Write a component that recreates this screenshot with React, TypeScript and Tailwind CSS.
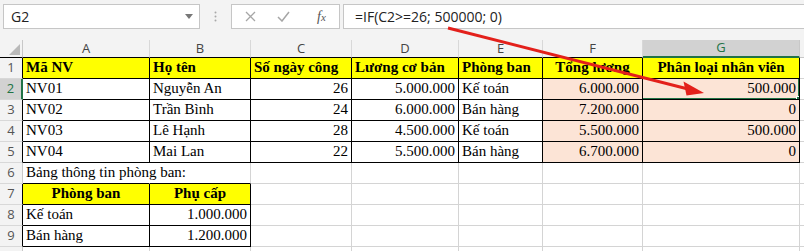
type CellProps = {
  t?: string;
  a?: "l" | "r" | "c";
  b?: boolean;
  bg?: string;
  br?: string;
  bb?: string;
  sel?: boolean;
  over?: boolean;
};

function Cell({ t, a = "l", b, bg = "bg-white", br = "border-r-[#d4d4d4]", bb = "border-b-[#d4d4d4]", sel, over }: CellProps) {
  const align = a === "r" ? "justify-end" : a === "c" ? "justify-center" : "justify-start";
  return (
    <div
      className={`relative flex items-end pb-[1px] px-[3px] border-r border-b whitespace-nowrap text-[15px] leading-[19px] text-black ${br} ${bb} ${bg} ${align} ${b ? "font-bold" : ""} ${over ? "overflow-visible z-10" : "overflow-hidden"}`}
    >
      {t}
      {sel && (
        <div className="absolute -left-[2px] -top-[2px] -right-[1px] -bottom-[1px] border-2 border-[#217346]">
          <div className="absolute -right-[4px] -bottom-[4px] w-[6px] h-[6px] bg-[#217346] border border-white" />
        </div>
      )}
    </div>
  );
}

function RowHead({ n, dark, black }: { n?: number; dark?: boolean; black?: boolean }) {
  return (
    <div
      className={`flex items-center justify-center border-b border-b-[#d8d8d8] text-[13px] ${dark ? "bg-[#d2d2d2] text-[#217346] border-r-2 border-r-[#217346]" : black ? "bg-[#f3f3f3] text-[#555] border-r border-r-black" : "bg-[#f3f3f3] text-[#555] border-r border-r-[#c8c8c8]"}`}
      style={{ fontFamily: '"Open Sans", "Noto Sans", sans-serif' }}
    >
      {n}
    </div>
  );
}

const Y = "bg-[#ffff00]";
const P = "bg-[#fce4d6]";
const K = "border-r-black";
const KB = "border-b-black";

export default function App() {
  const letters = ["A", "B", "C", "D", "E", "F", "G"];
  const emp = [
    ["NV01", "Nguyễn An", "26", "5.000.000", "Kế toán", "6.000.000", "500.000"],
    ["NV02", "Trần Bình", "24", "6.000.000", "Bán hàng", "7.200.000", "0"],
    ["NV03", "Lê Hạnh", "28", "4.500.000", "Kế toán", "5.500.000", "500.000"],
    ["NV04", "Mai Lan", "22", "5.500.000", "Bán hàng", "6.700.000", "0"],
  ];

  return (
    <div className="relative w-[804px] h-[251px] overflow-hidden bg-white" style={{ fontFamily: '"Liberation Serif", serif' }}>
      {/* formula bar */}
      <div
        className="h-[40px] bg-[#f3f3f3] flex items-start pt-[4px] pl-[3px] gap-0"
        style={{ fontFamily: '"Open Sans", "Noto Sans", sans-serif' }}
      >
        <div className="w-[197px] h-[25px] bg-white border border-[#c6c6c6] flex items-center justify-between pl-[7px] pr-[6px]">
          <span className="text-[14px] text-[#222]">G2</span>
          <svg width="8" height="5" viewBox="0 0 8 5">
            <path d="M0 0 L8 0 L4 5 Z" fill="#777" />
          </svg>
        </div>
        <div className="w-[31px] h-[25px] flex items-center justify-center">
          <svg width="3" height="11" viewBox="0 0 3 11">
            <circle cx="1.5" cy="1.5" r="1" fill="#a8a8a8" />
            <circle cx="1.5" cy="5.5" r="1" fill="#a8a8a8" />
            <circle cx="1.5" cy="9.5" r="1" fill="#a8a8a8" />
          </svg>
        </div>
        <div className="w-[109px] h-[25px] bg-white border border-[#c6c6c6] flex items-center">
          <div className="w-[36px] flex justify-center">
            <svg width="11" height="11" viewBox="0 0 11 11">
              <path d="M1 1 L10 10 M10 1 L1 10" stroke="#a6a6a6" strokeWidth="1.3" />
            </svg>
          </div>
          <div className="w-[30px] flex justify-center">
            <svg width="13" height="11" viewBox="0 0 13 11">
              <path d="M1 6 L5 10 L12 1" stroke="#a6a6a6" strokeWidth="1.5" fill="none" />
            </svg>
          </div>
          <div className="flex-1 flex justify-center pl-[6px]">
            <span className="italic text-[14px] text-[#555]" style={{ fontFamily: '"Liberation Serif", serif' }}>
              f<span className="text-[11px]">x</span>
            </span>
          </div>
        </div>
        <div className="ml-[3px] flex-1 h-[25px] bg-white border border-[#c6c6c6] border-r-0 flex items-center pl-[11px]">
          <span className="text-[14px] text-[#222]">=IF(C2&gt;=26; 500000; 0)</span>
        </div>
      </div>

      {/* sheet */}
      <div className="grid grid-cols-[23px_127px_101px_101px_107px_84px_100px_157px_1fr] grid-rows-[18px_repeat(9,21px)_21px]">
        {/* column headers */}
        <div className="bg-[#f3f3f3] border-r border-b border-r-[#c8c8c8] border-b-black flex items-end justify-end pr-[2px] pb-[2px]">
          <svg width="11" height="11" viewBox="0 0 11 11">
            <path d="M11 0 L11 11 L0 11 Z" fill="#b9b9b9" />
          </svg>
        </div>
        {letters.map((l) => (
          <div
            key={l}
            className={`flex items-center justify-center text-[13px] border-r ${l === "G" ? "bg-[#d2d2d2] text-[#217346] border-b-2 border-b-[#217346] border-r-[#c8c8c8]" : "bg-[#f3f3f3] text-[#444] border-b border-b-black border-r-[#d8d8d8]"}`}
            style={{ fontFamily: '"Open Sans", "Noto Sans", sans-serif' }}
          >
            {l}
          </div>
        ))}
        <div className="bg-[#f3f3f3] border-b border-b-[#c8c8c8]" />

        {/* row 1 */}
        <RowHead n={1} black />
        <Cell t="Mã NV" b bg={Y} br={K} bb={KB} />
        <Cell t="Họ tên" b bg={Y} br={K} bb={KB} />
        <Cell t="Số ngày công" b bg={Y} br={K} bb={KB} />
        <Cell t="Lương cơ bản" b bg={Y} br={K} bb={KB} />
        <Cell t="Phòng ban" b bg={Y} br={K} bb={KB} />
        <Cell t="Tổng lương" a="c" b bg={Y} br={K} bb={KB} />
        <Cell t="Phân loại nhân viên" a="c" b bg={Y} br={K} bb={KB} />
        <Cell />

        {/* rows 2-5 */}
        {emp.map((r, i) => [
          <RowHead key={`h${i}`} n={i + 2} dark={i === 0} black={i !== 0} />,
          <Cell key={`a${i}`} t={r[0]} br={K} bb={KB} />,
          <Cell key={`b${i}`} t={r[1]} br={K} bb={KB} />,
          <Cell key={`c${i}`} t={r[2]} a="r" br={K} bb={KB} />,
          <Cell key={`d${i}`} t={r[3]} a="r" br={K} bb={KB} />,
          <Cell key={`e${i}`} t={r[4]} br={K} bb={KB} />,
          <Cell key={`f${i}`} t={r[5]} a="r" bg={P} br={K} bb={KB} />,
          <Cell key={`g${i}`} t={r[6]} a="r" bg={P} br={K} bb={KB} sel={i === 0} />,
          <Cell key={`x${i}`} />,
        ])}

        {/* row 6 */}
        <RowHead n={6} />
        <Cell t="Bảng thông tin phòng ban:" br="border-r-transparent" bb={KB} over />
        <Cell bb={KB} />
        <Cell />
        <Cell />
        <Cell />
        <Cell />
        <Cell />
        <Cell />

        {/* rows 7-9 */}
        <RowHead n={7} black />
        <Cell t="Phòng ban" a="c" b bg={Y} br={K} bb={KB} />
        <Cell t="Phụ cấp" a="c" b bg={Y} br={K} bb={KB} />
        <Cell />
        <Cell />
        <Cell />
        <Cell />
        <Cell />
        <Cell />

        <RowHead n={8} black />
        <Cell t="Kế toán" br={K} bb={KB} />
        <Cell t="1.000.000" a="r" br={K} bb={KB} />
        <Cell />
        <Cell />
        <Cell />
        <Cell />
        <Cell />
        <Cell />

        <RowHead n={9} black />
        <Cell t="Bán hàng" br={K} bb={KB} />
        <Cell t="1.200.000" a="r" br={K} bb={KB} />
        <Cell />
        <Cell />
        <Cell />
        <Cell />
        <Cell />
        <Cell />

        {/* row 10, only its top edge shows */}
        <RowHead />
        <Cell />
        <Cell />
        <Cell />
        <Cell />
        <Cell />
        <Cell />
        <Cell />
        <Cell />
      </div>

      {/* red arrow annotation */}
      <svg className="absolute left-0 top-0 pointer-events-none" width="804" height="251" viewBox="0 0 804 251">
        <line x1="448" y1="28" x2="688" y2="89" stroke="#e3201b" strokeWidth="3" />
        <polygon points="704,93 683.5,81.5 686.5,95.5" fill="#e3201b" />
      </svg>
    </div>
  );
}
